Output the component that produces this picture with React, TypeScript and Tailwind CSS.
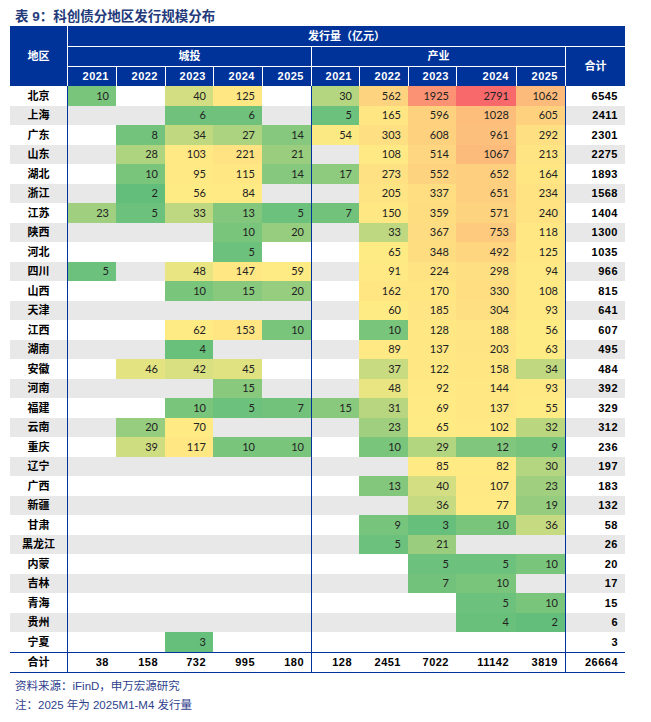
type Row = { name: string; ct: (number | null)[]; cy: (number | null)[]; total: number }

const _ = null

const ROWS: Row[] = [
  { name: '北京', ct: [10, _, 40, 125, _], cy: [30, 562, 1925, 2791, 1062], total: 6545 },
  { name: '上海', ct: [_, _, 6, 6, _], cy: [5, 165, 596, 1028, 605], total: 2411 },
  { name: '广东', ct: [_, 8, 34, 27, 14], cy: [54, 303, 608, 961, 292], total: 2301 },
  { name: '山东', ct: [_, 28, 103, 221, 21], cy: [_, 108, 514, 1067, 213], total: 2275 },
  { name: '湖北', ct: [_, 10, 95, 115, 14], cy: [17, 273, 552, 652, 164], total: 1893 },
  { name: '浙江', ct: [_, 2, 56, 84, _], cy: [_, 205, 337, 651, 234], total: 1568 },
  { name: '江苏', ct: [23, 5, 33, 13, 5], cy: [7, 150, 359, 571, 240], total: 1404 },
  { name: '陕西', ct: [_, _, _, 10, 20], cy: [_, 33, 367, 753, 118], total: 1300 },
  { name: '河北', ct: [_, _, _, 5, _], cy: [_, 65, 348, 492, 125], total: 1035 },
  { name: '四川', ct: [5, _, 48, 147, 59], cy: [_, 91, 224, 298, 94], total: 966 },
  { name: '山西', ct: [_, _, 10, 15, 20], cy: [_, 162, 170, 330, 108], total: 815 },
  { name: '天津', ct: [_, _, _, _, _], cy: [_, 60, 185, 304, 93], total: 641 },
  { name: '江西', ct: [_, _, 62, 153, 10], cy: [_, 10, 128, 188, 56], total: 607 },
  { name: '湖南', ct: [_, _, 4, _, _], cy: [_, 89, 137, 203, 63], total: 495 },
  { name: '安徽', ct: [_, 46, 42, 45, _], cy: [_, 37, 122, 158, 34], total: 484 },
  { name: '河南', ct: [_, _, _, 15, _], cy: [_, 48, 92, 144, 93], total: 392 },
  { name: '福建', ct: [_, _, 10, 5, 7], cy: [15, 31, 69, 137, 55], total: 329 },
  { name: '云南', ct: [_, 20, 70, _, _], cy: [_, 23, 65, 102, 32], total: 312 },
  { name: '重庆', ct: [_, 39, 117, 10, 10], cy: [_, 10, 29, 12, 9], total: 236 },
  { name: '辽宁', ct: [_, _, _, _, _], cy: [_, _, 85, 82, 30], total: 197 },
  { name: '广西', ct: [_, _, _, _, _], cy: [_, 13, 40, 107, 23], total: 183 },
  { name: '新疆', ct: [_, _, _, _, _], cy: [_, _, 36, 77, 19], total: 132 },
  { name: '甘肃', ct: [_, _, _, _, _], cy: [_, 9, 3, 10, 36], total: 58 },
  { name: '黑龙江', ct: [_, _, _, _, _], cy: [_, 5, 21, _, _], total: 26 },
  { name: '内蒙', ct: [_, _, _, _, _], cy: [_, _, 5, 5, 10], total: 20 },
  { name: '吉林', ct: [_, _, _, _, _], cy: [_, _, 7, 10, _], total: 17 },
  { name: '青海', ct: [_, _, _, _, _], cy: [_, _, _, 5, 10], total: 15 },
  { name: '贵州', ct: [_, _, _, _, _], cy: [_, _, _, 4, 2], total: 6 },
  { name: '宁夏', ct: [_, _, 3, _, _], cy: [_, _, _, _, _], total: 3 },
]

const SUMS = [38, 158, 732, 995, 180, 128, 2451, 7022, 11142, 3819, 26664]
const YEARS = ['2021', '2022', '2023', '2024', '2025']

const COLS = 'grid grid-cols-[57px_49px_49px_48px_49px_49px_48px_49px_48px_60px_49px_60px]'

// excel-style 3 colour scale: min green, median yellow, max red
const ALL = ROWS.flatMap((r) => [...r.ct, ...r.cy]).filter((v): v is number => v !== null).sort((a, b) => a - b)
const MIN = ALL[0]
const MAX = ALL[ALL.length - 1]
const MID = (() => {
  const p = (ALL.length - 1) / 2
  const lo = Math.floor(p)
  return ALL[lo] + (ALL[Math.ceil(p)] - ALL[lo]) * (p - lo)
})()

const GREEN = [99, 190, 123]
const YELLOW = [255, 235, 132]
const RED = [248, 105, 107]

function heat(v: number) {
  const [a, b, t] = v <= MID ? [GREEN, YELLOW, (v - MIN) / (MID - MIN)] : [YELLOW, RED, (v - MID) / (MAX - MID)]
  const c = a.map((x, i) => Math.round(x + (b[i] - x) * t))
  return `rgb(${c[0]},${c[1]},${c[2]})`
}

function Cell({ v, line }: { v: number | null; line?: boolean }) {
  return (
    <div
      className={`flex items-center justify-end pr-[7px] font-[Lato] text-[11px] text-[#222] ${line ? 'border-l border-[#003399]' : ''}`}
      style={v !== null ? { backgroundColor: heat(v) } : undefined}
    >
      {v}
    </div>
  )
}

export default function App() {
  return (
    <div className="w-[651px] h-[722px] bg-white px-[10px] font-['Liberation_Sans','Noto_Sans_CJK_SC',sans-serif]">
      <div className="pt-[7px] pl-[5px] h-[26px] leading-[19px] text-[13.5px] font-bold text-[#243a7a]">
        表 9：科创债分地区发行规模分布
      </div>

      <div className="w-[615px]">
        <div className={`${COLS} grid-rows-[20px_20px_20px] bg-[#003399] text-[11px] font-bold text-white`}>
          <div className="row-span-3 flex items-center justify-center">地区</div>
          <div className="col-span-11 flex items-center justify-center border-l border-white">发行量（亿元）</div>
          <div className="col-span-5 flex items-center justify-center border-l border-t border-white">城投</div>
          <div className="col-span-5 flex items-center justify-center border-l border-t border-white">产业</div>
          <div className="row-span-2 flex items-center justify-center border-l border-t border-white">合计</div>
          {[...YEARS, ...YEARS].map((y, i) => (
            <div key={i} className="flex items-center justify-end border-l border-t border-white pr-[7px] tracking-[0.5px]">
              {y}
            </div>
          ))}
        </div>

        {ROWS.map((r, i) => (
          <div key={r.name} className={`${COLS} h-[19.5px] ${i % 2 ? 'bg-[#e8e8e8]' : 'bg-white'}`}>
            <div className="flex items-center justify-center text-[11px] font-bold text-black">{r.name}</div>
            {r.ct.map((v, j) => (
              <Cell key={`c${j}`} v={v} line={j === 0} />
            ))}
            {r.cy.map((v, j) => (
              <Cell key={`y${j}`} v={v} line={j === 0} />
            ))}
            <div className="flex items-center justify-end border-l border-[#003399] pr-[7px] text-[11px] font-bold text-black tracking-[0.5px]">
              {r.total}
            </div>
          </div>
        ))}

        <div className={`${COLS} h-[21px] border-y border-[#003399] text-[11px] font-bold text-black`}>
          <div className="flex items-center justify-center">合计</div>
          {SUMS.map((s, i) => (
            <div
              key={i}
              className={`flex items-center justify-end pr-[7px] tracking-[0.5px] ${i === 0 || i === 5 || i === 10 ? 'border-l border-[#003399]' : ''}`}
            >
              {s}
            </div>
          ))}
        </div>
      </div>

      <div className="pt-[4px] pl-[5px] text-[11.5px] leading-[19px] text-[#2f3f8c]">
        <div>资料来源：iFinD，申万宏源研究</div>
        <div>注：2025 年为 2025M1-M4 发行量</div>
      </div>
    </div>
  )
}
